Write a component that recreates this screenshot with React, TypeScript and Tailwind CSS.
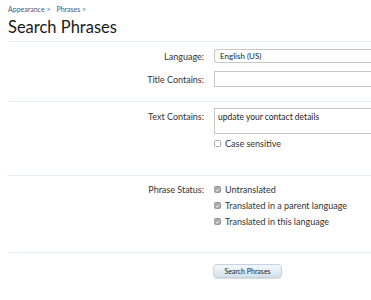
const Check = ({ checked }: { checked?: boolean }) => (
  <span
    className={`flex h-[7px] w-[7px] shrink-0 items-center justify-center rounded-[1.5px] border ${
      checked ? 'border-[#9a9a9a] bg-[#a8a8a8]' : 'border-[#a9a9a9] bg-white'
    }`}
  >
    {checked && (
      <svg viewBox="0 0 8 8" className="h-[6px] w-[6px]">
        <path d="M1.5 4.2 L3.3 6 L6.6 1.8" fill="none" stroke="#fff" strokeWidth="1.4" />
      </svg>
    )}
  </span>
);

const Label = ({ children }: { children: React.ReactNode }) => (
  <div className="w-[204px] shrink-0 text-right text-[9px] leading-[11px] text-[#333]">{children}</div>
);

const Rule = ({ className }: { className: string }) => (
  <div className={`ml-2 border-b border-[#e3ecf0] ${className}`} />
);

export default function App() {
  return (
    <div className="h-[300px] w-[371px] overflow-hidden bg-white font-['Lato',sans-serif]">
      <div className="flex pl-2 pt-[4px] text-[7px] leading-[10px] text-[#3a5a82]">
        <span>Appearance &gt;</span>
        <span className="ml-[6px]">Phrases &gt;</span>
      </div>
      <h1 className="mt-[2px] pl-2 text-[16.5px] leading-[22px] text-[#1a1a1a]">Search Phrases</h1>
      <Rule className="mt-[3px]" />

      <div className="flex items-center pt-[7px]">
        <Label>Language:</Label>
        <div className="ml-[10px] flex h-[14px] flex-1 items-center rounded-l-[3px] border border-r-0 border-[#c8c8c8] pl-[5px] text-[8px] text-[#222]">
          English (US)
        </div>
      </div>
      <div className="mt-[8px] flex items-center">
        <Label>Title Contains:</Label>
        <div className="ml-[10px] h-[16px] flex-1 border border-r-0 border-[#c8c8c8]" />
      </div>
      <Rule className="mt-[14px]" />

      <div className="flex items-start pt-[6px]">
        <div className="pt-[3px]">
          <Label>Text Contains:</Label>
        </div>
        <div className="ml-[10px] flex-1">
          <div className="h-[26px] border border-r-0 border-[#c8c8c8] pl-[3px] pt-[3px] text-[8.5px] leading-[10px] text-[#222]">
            update your contact details
          </div>
          <label className="mt-[4px] flex h-[11px] items-center gap-[4px] text-[9px] text-[#333]">
            <Check /> Case sensitive
          </label>
        </div>
      </div>
      <Rule className="mt-[26px]" />

      <div className="flex items-start pt-[8px]">
        <Label>Phrase Status:</Label>
        <div className="ml-[10px] flex flex-col gap-[5px] text-[9px] text-[#333]">
          <label className="flex h-[11px] items-center gap-[4px]">
            <Check checked /> Untranslated
          </label>
          <label className="flex h-[11px] items-center gap-[4px]">
            <Check checked /> Translated in a parent language
          </label>
          <label className="flex h-[11px] items-center gap-[4px]">
            <Check checked /> Translated in this language
          </label>
        </div>
      </div>
      <Rule className="mt-[25px]" />

      <div className="flex pl-[213px] pt-[11px]">
        <button className="h-[14px] w-[69px] rounded-[4px] border border-[#c5d3e0] bg-gradient-to-b from-[#f4f8fb] to-[#d2e0ec] text-[7px] text-[#222] shadow-[0_1px_1px_rgba(0,0,0,0.15)]">
          Search Phrases
        </button>
      </div>
    </div>
  );
}
